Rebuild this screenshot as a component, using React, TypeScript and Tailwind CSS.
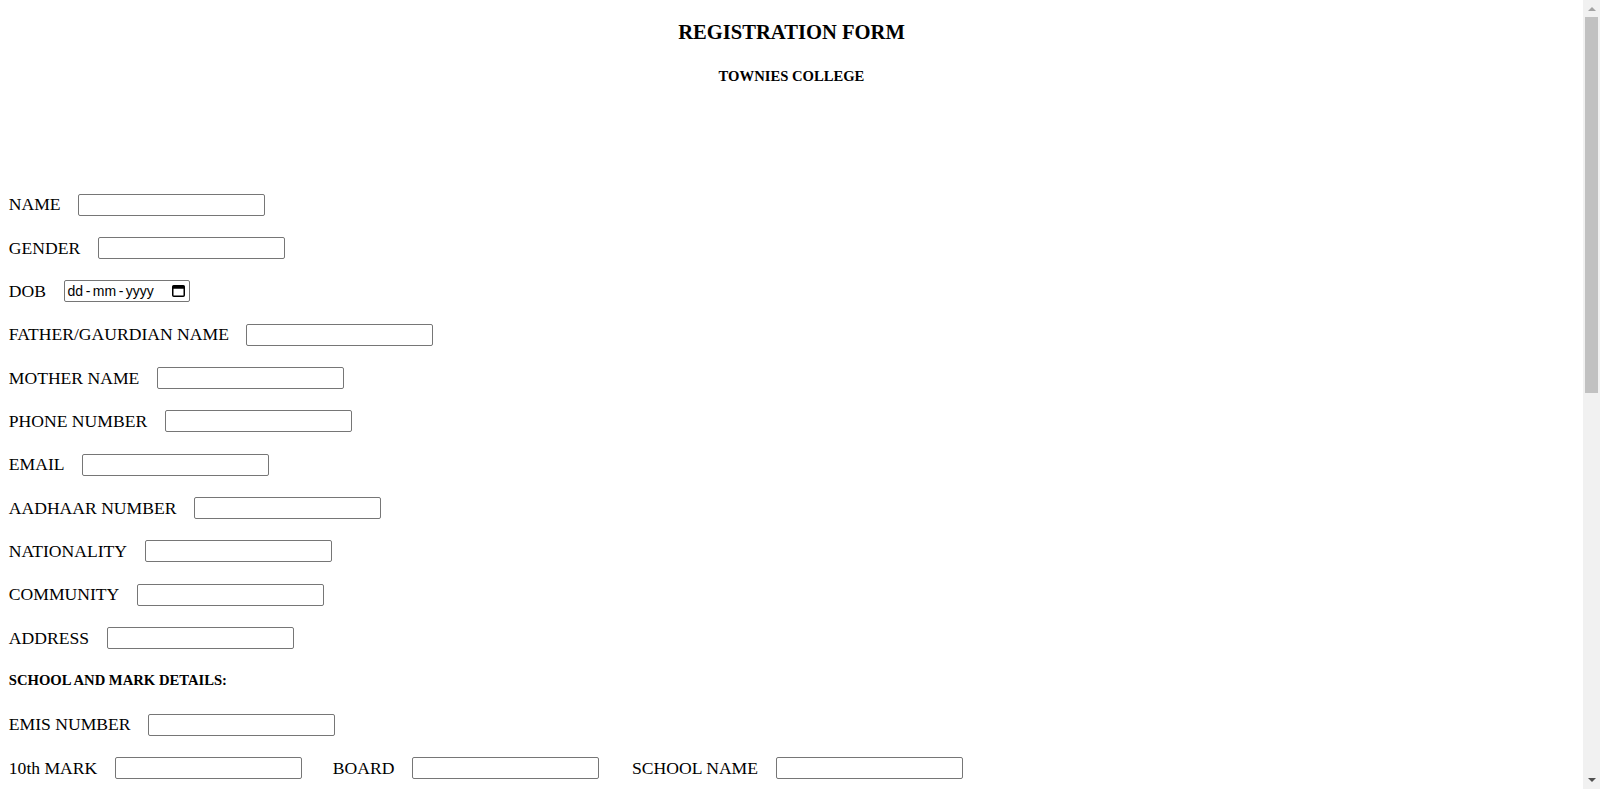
const serif = { fontFamily: '"Liberation Serif", "Times New Roman", serif' };
const sans = { fontFamily: '"Liberation Sans", Arial, sans-serif' };

function TextBox() {
  return (
    <input
      type="text"
      className="h-[22px] w-[187px] rounded-[2px] border border-[#767676] bg-white px-[2px] text-[14.67px] outline-none"
    />
  );
}

function DateBox() {
  return (
    <div
      className="ml-[17.6px] flex h-[22px] w-[126px] items-center rounded-[2px] border border-[#767676] bg-white pl-[3px] pr-[4px] text-[14px] text-black"
      style={sans}
    >
      <span className="flex-1">
        dd<span className="px-[2.5px]">-</span>mm<span className="px-[2.5px]">-</span>yyyy
      </span>
      <svg width="13" height="12" viewBox="0 0 13 12" aria-hidden>
        <rect x="0.75" y="0.75" width="11.5" height="10.5" rx="1" fill="none" stroke="#000" strokeWidth="1.5" />
        <rect x="0.75" y="0.75" width="11.5" height="3" fill="#000" />
      </svg>
    </div>
  );
}

function Row({ label, children }: { label: string; children?: React.ReactNode }) {
  return (
    <div className="flex h-[43.33px] items-center">
      <span>{label}</span>
      {children ?? (
        <span className="ml-[17.6px] flex">
          <TextBox />
        </span>
      )}
    </div>
  );
}

function MarkRow({ mark }: { mark: string }) {
  return (
    <div className="flex h-[43.33px] items-center">
      <span>{mark}</span>
      <span className="ml-[17.6px] flex">
        <TextBox />
      </span>
      <span className="ml-[31px]">BOARD</span>
      <span className="ml-[17.6px] flex">
        <TextBox />
      </span>
      <span className="ml-[33px]">SCHOOL NAME</span>
      <span className="ml-[17.6px] flex">
        <TextBox />
      </span>
    </div>
  );
}

// browser-like vertical scrollbar (page is longer than the window)
function Scrollbar() {
  return (
    <div className="flex w-[17px] shrink-0 flex-col bg-[#f1f1f1]">
      <div className="flex h-[17px] items-center justify-center">
        <svg width="8" height="5" viewBox="0 0 8 5" aria-hidden>
          <path d="M0 5 L4 1 L8 5 Z" fill="#a3a3a3" />
        </svg>
      </div>
      <div className="px-[2px]">
        <div className="h-[376px] bg-[#c1c1c1]" />
      </div>
      <div className="flex-1" />
      <div className="flex h-[17px] items-center justify-center">
        <svg width="8" height="5" viewBox="0 0 8 5" aria-hidden>
          <path d="M0 0 L4 4 L8 0 Z" fill="#505050" />
        </svg>
      </div>
    </div>
  );
}

const personal = [
  "NAME",
  "GENDER",
  "DOB",
  "FATHER/GAURDIAN NAME",
  "MOTHER NAME",
  "PHONE NUMBER",
  "EMAIL",
  "AADHAAR NUMBER",
  "NATIONALITY",
  "COMMUNITY",
  "ADDRESS",
];

export default function App() {
  return (
    <div className="flex h-[789px] overflow-hidden bg-white text-black">
      <main className="min-w-0 flex-1 overflow-hidden pt-[20px] text-[17.6px]" style={serif}>
        <h1 className="text-center text-[20.6px] font-bold leading-[24px]">REGISTRATION FORM</h1>
        <h2 className="mt-[23px] text-center text-[14.65px] font-bold leading-[18px]">TOWNIES COLLEGE</h2>

        <form className="mt-[98px] pl-[8.8px]" onSubmit={(e) => e.preventDefault()}>
          {personal.map((label) =>
            label === "DOB" ? (
              <Row key={label} label={label}>
                <DateBox />
              </Row>
            ) : (
              <Row key={label} label={label} />
            )
          )}

          <div className="flex h-[43.33px] items-center text-[14.65px] font-bold">SCHOOL AND MARK DETAILS:</div>
          <Row label="EMIS NUMBER" />
          <MarkRow mark="10th MARK" />
        </form>
      </main>
      <Scrollbar />
    </div>
  );
}
